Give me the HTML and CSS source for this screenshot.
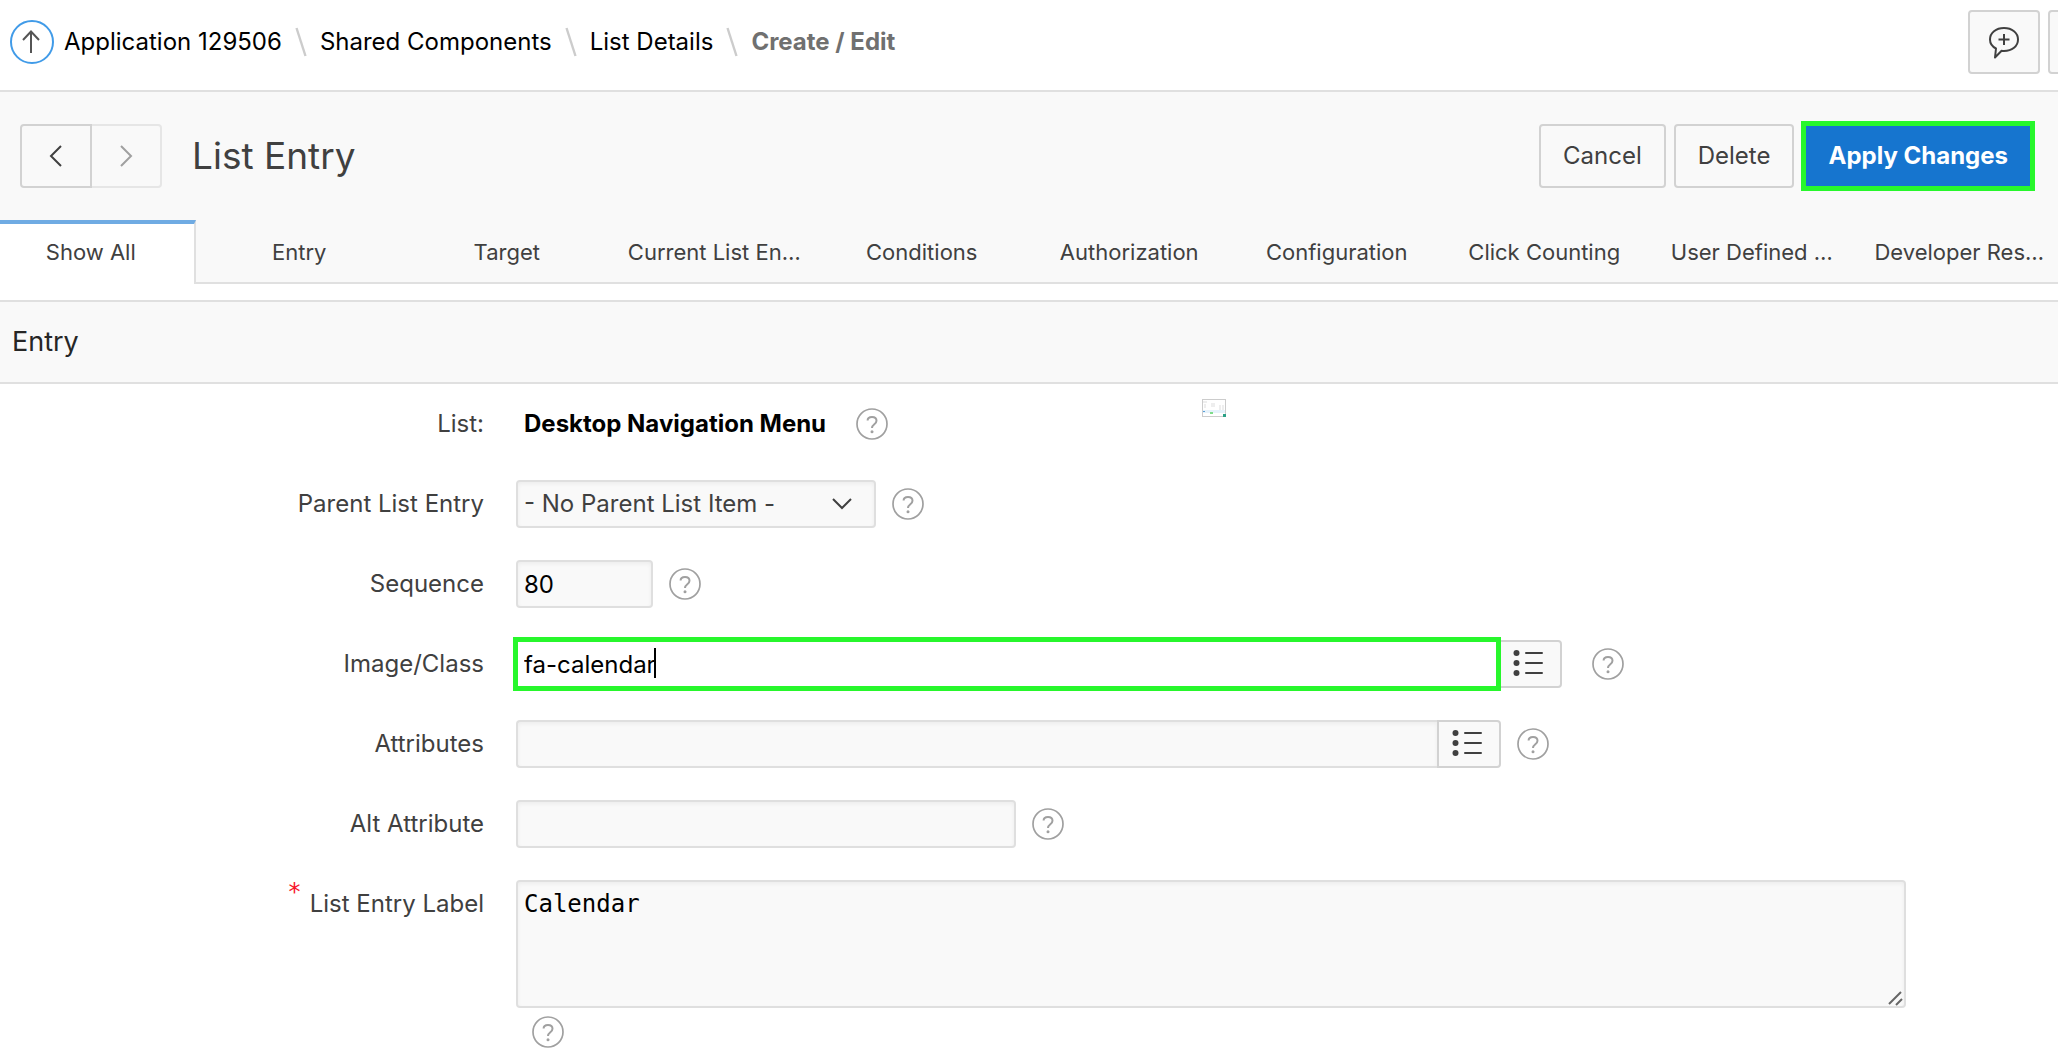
FILE: index.html
```
<!DOCTYPE html>
<html lang="en">
<head>
<meta charset="utf-8">
<title>List Entry</title>
<link rel="stylesheet" href="styles.css">
</head>
<body>
<svg class="sprite" aria-hidden="true">
  <symbol id="help" viewBox="0 0 32 32">
    <circle cx="16" cy="16" r="15" fill="none" stroke="currentColor" stroke-width="1.7"/>
    <path d="M11.6 12.6C11.6 10.3 13.5 9 16 9c2.700 0 4.500 1.500 4.500 3.700 0 1.800-1 2.700-2.400 3.800-1.400 1.100-2.100 1.700-2.100 3.400" fill="none" stroke="currentColor" stroke-width="2"/>
    <circle cx="16" cy="23.800" r="1.500" fill="currentColor"/>
  </symbol>
  <symbol id="list" viewBox="0 0 30 26">
    <g fill="currentColor"><circle cx="3.500" cy="3" r="3"/><circle cx="3.500" cy="13" r="3"/><circle cx="3.500" cy="23" r="3"/></g>
    <path d="M13 3h16M13 13h16M13 23h16" stroke="currentColor" stroke-width="2" stroke-linecap="round"/>
  </symbol>
  <symbol id="slash" viewBox="0 0 12 30">
    <path d="M1.500 1L10.500 29" stroke="#ccc" stroke-width="2.400"/>
  </symbol>
</svg>

<header class="topbar">
  <a class="up" href="#" aria-label="Up">
    <svg width="44" height="44" viewBox="0 0 44 44" fill="none"><circle cx="22" cy="22" r="21" stroke="#419be8" stroke-width="2"/><path d="M21 33V12M13 20l8-8.500 8 8.500" stroke="#555" stroke-width="2"/></svg>
  </a>
  <nav class="crumbs" aria-label="Breadcrumb">
    <a href="#">Application 129506</a>
    <svg class="slash"><use href="#slash"/></svg>
    <a href="#">Shared Components</a>
    <svg class="slash"><use href="#slash"/></svg>
    <a href="#">List Details</a>
    <svg class="slash"><use href="#slash"/></svg>
    <span class="current">Create / Edit</span>
  </nav>
  <div class="tools">
    <button class="btn icon" aria-label="Feedback">
      <svg width="32" height="34" viewBox="0 0 32 34" fill="none" stroke="#404040" stroke-width="2"><path d="M8 23.500C4 21.500 2 18.300 2 14.500 2 7.800 8 3 16 3s14 4.800 14 11.500S24 26 16 26c-.8 0-1.600 0-2.400-.2L7 32.500z" stroke-linejoin="round"/><path d="M16 9v11M10.500 14.500h11"/></svg>
    </button>
    <button class="btn icon" aria-label="Edit page"></button>
  </div>
</header>

<section class="titlebar">
  <div class="pager">
    <button class="btn icon prev" aria-label="Previous"><svg width="14" height="24" viewBox="0 0 14 24" fill="none"><path d="M12 2L2 12l10 10" stroke="#404040" stroke-width="2"/></svg></button>
    <button class="btn icon next" aria-label="Next" disabled><svg width="14" height="24" viewBox="0 0 14 24" fill="none"><path d="M2 2l10 10L2 22" stroke="#a0a0a0" stroke-width="2"/></svg></button>
  </div>
  <h1>List Entry</h1>
  <div class="actions">
    <button class="btn">Cancel</button>
    <button class="btn">Delete</button>
    <button class="btn hot">Apply Changes</button>
  </div>
</section>

<nav class="tabs" aria-label="Sections">
  <a class="tab active" href="#">Show All</a>
  <a class="tab" href="#">Entry</a>
  <a class="tab" href="#">Target</a>
  <a class="tab" href="#">Current List En…</a>
  <a class="tab" href="#">Conditions</a>
  <a class="tab" href="#">Authorization</a>
  <a class="tab" href="#">Configuration</a>
  <a class="tab" href="#">Click Counting</a>
  <a class="tab" href="#">User Defined …</a>
  <a class="tab" href="#">Developer Res…</a>
</nav>

<main class="region">
  <h2>Entry</h2>
  <form class="form">
    <svg class="thumb" viewBox="0 0 24 18"><rect x=".5" y=".5" width="23" height="17" fill="#fff" stroke="#ccc"/><path d="M1 3h4M2 6h2M2 8h2M9 5h4M9 7h4M18 6v5M21 6v5" stroke="#ddd"/><path d="M1 12.500h22" stroke="#e6f2fb" stroke-width="3"/><path d="M1 12.500h2" stroke="#5ba0d8"/><path d="M8 14h3" stroke="#7fdc8a" stroke-width="2"/><path d="M21 16.500h3" stroke="#2aa187" stroke-width="3"/></svg>
    <div class="row">
      <span class="label">List:</span>
      <div class="field"><output class="display">Desktop Navigation Menu</output><button type="button" class="help" aria-label="Help: List"><svg><use href="#help"/></svg></button></div>
    </div>
    <div class="row">
      <label class="label" for="parent">Parent List Entry</label>
      <div class="field">
        <div class="select"><select id="parent" class="control"><option>- No Parent List Item -</option></select><svg class="chevron" viewBox="0 0 20 12" fill="none"><path d="M1 1l9 9 9-9" stroke="#404040" stroke-width="2"/></svg></div>
        <button type="button" class="help" aria-label="Help: Parent List Entry"><svg><use href="#help"/></svg></button>
      </div>
    </div>
    <div class="row">
      <label class="label" for="seq">Sequence</label>
      <div class="field"><input id="seq" class="control small" value="80"><button type="button" class="help" aria-label="Help: Sequence"><svg><use href="#help"/></svg></button></div>
    </div>
    <div class="row">
      <label class="label" for="image">Image/Class</label>
      <div class="field">
        <div class="group"><div class="focus-box"><input id="image" class="control wide focused" value="fa-calendar"><span class="caret"></span></div><button type="button" class="btn pick" aria-label="Pick image"><svg><use href="#list"/></svg></button></div>
        <button type="button" class="help far" aria-label="Help: Image/Class"><svg><use href="#help"/></svg></button>
      </div>
    </div>
    <div class="row">
      <label class="label" for="attrs">Attributes</label>
      <div class="field">
        <div class="group"><input id="attrs" class="control long"><button type="button" class="btn pick" aria-label="Pick attributes"><svg><use href="#list"/></svg></button></div>
        <button type="button" class="help" aria-label="Help: Attributes"><svg><use href="#help"/></svg></button>
      </div>
    </div>
    <div class="row">
      <label class="label" for="alt">Alt Attribute</label>
      <div class="field"><input id="alt" class="control medium"><button type="button" class="help" aria-label="Help: Alt Attribute"><svg><use href="#help"/></svg></button></div>
    </div>
    <div class="row tall">
      <label class="label" for="entry"><span class="req">*</span>List Entry Label</label>
      <div class="field stacked">
        <div class="area"><textarea id="entry" class="control">Calendar</textarea><svg class="grip" viewBox="0 0 16 16"><path d="M2 14L14 2M9 15l6-6" stroke="#666" stroke-width="2"/></svg></div>
        <button type="button" class="help" aria-label="Help: List Entry Label"><svg><use href="#help"/></svg></button>
      </div>
    </div>
  </form>
</main>
</body>
</html>
```
FILE: styles.css
```
* { box-sizing: border-box; }

body {
  margin: 0;
  overflow: hidden;
  background: #fff;
  color: #404040;
  font: 24px/32px Inter, "Liberation Sans", sans-serif;
}

a { color: inherit; text-decoration: none; }
.sprite { display: none; }

.btn {
  height: 64px;
  padding: 0 22px;
  border: 2px solid #d2d2d2;
  border-radius: 4px;
  background: #f9f9f9;
  color: #404040;
  font: inherit;
}
.btn.icon {
  display: flex;
  flex: none;
  align-items: center;
  justify-content: center;
  width: 72px;
  padding: 0;
}

/* Breadcrumb bar */
.topbar {
  display: flex;
  align-items: center;
  height: 92px;
  padding: 0 0 6px 10px;
  border-bottom: 2px solid #e0e0e0;
  overflow: hidden;
}
.up, .up svg { display: block; }
.crumbs {
  display: flex;
  align-items: center;
  gap: 13px;
  margin-left: 10px;
  color: #000;
  white-space: nowrap;
}
.slash { width: 12px; height: 30px; }
.current { color: #707070; font-weight: 700; }
.tools { display: flex; gap: 8px; margin: 0 -62px 0 auto; }

/* Title and actions */
.titlebar {
  display: flex;
  align-items: center;
  height: 128px;
  padding: 0 26px 0 20px;
  background: #f9f9f9;
}
.pager { display: flex; }
.prev { border-radius: 4px 0 0 4px; }
.btn.next { width: 70px; border-color: #e6e6e6; border-left: 0; border-radius: 0 4px 4px 0; }
h1 { margin: 0 0 0 30px; font-size: 37px; font-weight: 400; line-height: 48px; }
.actions { display: flex; gap: 8px; margin-left: auto; }
.btn.hot {
  margin-left: 2px;
  border-color: #1f8f8c;
  border-radius: 0;
  background: #1675cf;
  color: #fff;
  font-weight: 700;
  outline: 5px solid #27f72c;
  outline-offset: -2px;
}

/* Section tabs */
.tabs {
  display: grid;
  grid-template-columns: repeat(10, 1fr);
  height: 64px;
  margin: 0 -5px 0 -12px;
  background: #f9f9f9;
}
.tab {
  padding: 16px 8px 14px;
  border-bottom: 2px solid #e0e0e0;
  font-size: 22px;
  text-align: center;
  white-space: nowrap;
}
.tab.active {
  padding-top: 12px;
  border-top: 4px solid #6fabe3;
  border-right: 2px solid #e0e0e0;
  border-bottom: 0;
  background: #fff;
}

/* Entry region */
.region { margin-top: 16px; }
h2 {
  margin: 0;
  padding: 24px 12px;
  border: solid #e0e0e0;
  border-width: 2px 0;
  background: #f9f9f9;
  color: #262626;
  font-size: 27px;
  font-weight: 400;
}
.form { position: relative; padding-left: 2px; }
.row { display: grid; grid-template-columns: 25% 1fr; min-height: 80px; padding: 16px 0; }
.label { padding: 8px 32px 8px 0; text-align: right; }
.field { display: flex; align-items: center; }
.field.stacked { flex-direction: column; align-items: flex-start; gap: 8px; }
.display { padding: 0 0 0 8px; color: #000; font-weight: 700; width: 324px; white-space: nowrap; }

.control {
  display: block;
  width: 100%;
  height: 48px;
  padding: 0 6px;
  border: 2px solid #dfdfdf;
  border-radius: 4px;
  background: #f9f9f9;
  box-shadow: inset 0 2px 4px rgba(0, 0, 0, .05);
  color: #000;
  font: inherit;
  outline: 0;
}
select.control { appearance: none; color: #404040; }
.small { width: 137px; }
.medium { width: 500px; }
.long { width: 921px; border-right: 0; border-radius: 4px 0 0 4px; }
.wide { width: 982px; }
.select { position: relative; width: 360px; }
.chevron { position: absolute; top: 18px; right: 24px; width: 20px; height: 12px; }

.group { display: flex; }
.focus-box { position: relative; z-index: 1; }
.focused {
  border-color: #fff;
  border-radius: 0;
  background: #fff;
  box-shadow: none;
  outline: 5px solid #27f72c;
  outline-offset: -2px;
}
.caret { position: absolute; top: 8px; left: 138px; width: 2px; height: 30px; background: #000; }
.btn.pick { display: flex; align-items: center; justify-content: center; width: 64px; height: 48px; padding: 0 4px 2px 0; border-radius: 0 4px 4px 0; }
.pick svg { width: 30px; height: 26px; }

.help { flex: none; width: 32px; height: 32px; margin-left: 16px; padding: 0; border: 0; background: none; color: #a0a0a0; }
.help svg { display: block; width: 32px; height: 32px; }
.help.far { margin-left: 30px; }

.req { margin-right: 8px; color: #f7142b; font: 24px/8px "DejaVu Sans Mono", monospace; vertical-align: 12px; }
.area { position: relative; width: 1390px; max-width: 100%; }
textarea.control { height: 128px; padding: 6px; font-family: "DejaVu Sans Mono", monospace; resize: none; }
.grip { position: absolute; right: 3px; bottom: 2px; width: 16px; height: 16px; }
.thumb { position: absolute; top: 15px; left: 1202px; width: 24px; height: 18px; }
```
